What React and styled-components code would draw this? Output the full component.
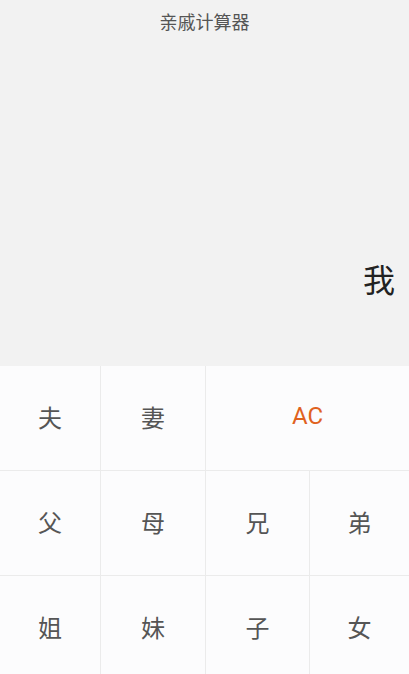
import styled, { createGlobalStyle } from "styled-components";

const GlobalStyle = createGlobalStyle`
  html, body {
    margin: 0;
    padding: 0;
    background: #f2f2f2;
    overflow: hidden;
  }
  body {
    font-family: "Noto Sans CJK SC", "Noto Sans", sans-serif;
  }
`;

const keys = [
  { label: "夫" },
  { label: "妻" },
  { label: "AC", wide: true, accent: true },
  { label: "父" },
  { label: "母" },
  { label: "兄" },
  { label: "弟" },
  { label: "姐" },
  { label: "妹" },
  { label: "子" },
  { label: "女" },
];

export default function App() {
  return (
    <>
      <GlobalStyle />
      <Page>
        <Display>
          <Title>亲戚计算器</Title>
          <Result>我</Result>
        </Display>
        <Pad>
          {keys.map((k) => (
            <Key key={k.label} $wide={k.wide} $accent={k.accent}>
              {k.label}
            </Key>
          ))}
        </Pad>
      </Page>
    </>
  );
}

const Page = styled.div`
  width: 409px;
  height: 674px;
  display: flex;
  flex-direction: column;
  overflow: hidden;
`;

const Display = styled.div`
  height: 366px;
  flex-shrink: 0;
  background: #f2f2f2;
  display: flex;
  flex-direction: column;
  justify-content: space-between;
  align-items: stretch;
  padding: 8px 14px 68px;
  box-sizing: border-box;
`;

const Title = styled.div`
  text-align: center;
  font-size: 18px;
  line-height: 26px;
  color: #555;
`;

const Result = styled.div`
  text-align: right;
  font-size: 32px;
  line-height: 40px;
  color: #222;
`;

const Pad = styled.div`
  display: grid;
  grid-template-columns: 100px 104px 103px 1fr;
  grid-auto-rows: 104px;
  gap: 1px;
  background: #ebebeb;
  flex-shrink: 0;
`;

const Key = styled.button`
  grid-column: ${(p) => (p.$wide ? "span 2" : "span 1")};
  border: none;
  margin: 0;
  padding: 0 0 4px;
  background: #fcfcfd;
  font-family: ${(p) =>
    p.$accent ? '"Roboto", "Noto Sans", sans-serif' : '"Noto Sans CJK SC", sans-serif'};
  font-size: 24px;
  color: ${(p) => (p.$accent ? "#e0621e" : "#555")};
  display: flex;
  align-items: center;
  justify-content: center;
  cursor: pointer;
`;
